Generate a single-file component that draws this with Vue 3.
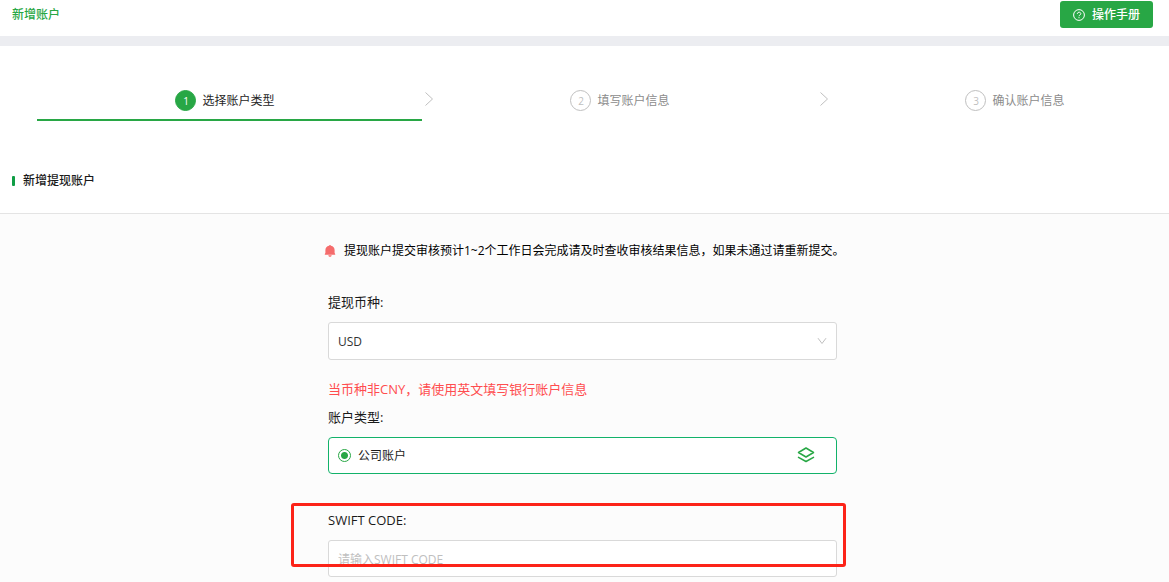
<script setup>
import { ref } from 'vue'

const steps = ['选择账户类型', '填写账户信息', '确认账户信息']
const current = ref(0)
const currency = ref('USD')
const accountType = ref('company')
const swift = ref('')
</script>

<template>
  <div class="page">
    <header class="topbar">
      <h1>新增账户</h1>
      <button type="button" class="manual">
        <svg viewBox="0 0 12 12" width="12" height="12" fill="none" stroke="currentColor" aria-hidden="true">
          <circle cx="6" cy="6" r="5.4" />
          <path d="M4.3 4.9c0-2.3 3.5-2.2 3.5-.2 0 1.3-1.8 1.2-1.8 2.5M6 8.2v1" />
        </svg>
        <span>操作手册</span>
      </button>
    </header>

    <nav class="steps-wrap">
      <ol class="steps">
        <li v-for="(step, i) in steps" :key="step" :class="{ active: i === current }">
          <span class="num">{{ i + 1 }}</span>
          <span>{{ step }}</span>
          <svg v-if="i < steps.length - 1" class="arrow" viewBox="0 0 8 14" width="8" height="14" fill="none" stroke="#bfbfbf" aria-hidden="true">
            <path d="M.5.5 7.5 7 .5 13.5" />
          </svg>
        </li>
      </ol>
    </nav>

    <h2 class="section-title">新增提现账户</h2>

    <main class="content">
      <form class="form" @submit.prevent>
        <p class="notice">
          <svg viewBox="0 0 12 14" width="12" height="14" fill="#f56c6c" aria-hidden="true">
            <path d="M6 1c.6 0 .9.3 1 .8 2.200.4 3.600 2 3.600 4.200v3l.6.900v.900H.8v-.9l.6-.9V6c0-2.200 1.400-3.800 3.600-4.200.1-.5.4-.8 1-.8zM4.300 11.200h3.400c-.2 1-.9 1.600-1.700 1.600s-1.500-.6-1.700-1.600z" />
          </svg>
          <span>提现账户提交审核预计1~2个工作日会完成请及时查收审核结果信息，如果未通过请重新提交。</span>
        </p>

        <label class="label" for="currency">提现币种:</label>
        <div class="select-box">
          <select id="currency" v-model="currency">
            <option>USD</option>
          </select>
          <svg viewBox="0 0 10 8" width="10" height="8" fill="none" stroke="#bfbfbf" aria-hidden="true">
            <path d="M1 1.200 5 6.500 9 1.200" />
          </svg>
        </div>
        <p class="warning">当币种非CNY，请使用英文填写银行账户信息</p>

        <div id="type-label" class="label">账户类型:</div>
        <label class="type-card">
          <input v-model="accountType" type="radio" name="type" value="company" aria-describedby="type-label">
          <span>公司账户</span>
          <svg viewBox="0 0 18 17" width="18" height="17" fill="none" stroke="#28a745" stroke-width="1.500" stroke-linejoin="round" stroke-linecap="round" aria-hidden="true">
            <path d="M9 1 16.500 5.500 9 10 1.500 5.500zM1.500 10.300 9 14.500l7.500-4.200" />
          </svg>
        </label>

        <div class="swift">
          <label class="label" for="swift">SWIFT CODE:</label>
          <input id="swift" v-model="swift" type="text" placeholder="请输入SWIFT CODE">
          <div class="highlight"></div>
        </div>
      </form>
    </main>
  </div>
</template>

<style>
body {
  background: #fcfcfc;
}
</style>

<style scoped>
.page {
  overflow: hidden;
  font-family: "Open Sans", "Noto Sans CJK SC", sans-serif;
  font-size: 12px;
  line-height: 20px;
  color: #1a1a1a;
}
.page * {
  box-sizing: border-box;
}
h1,
h2,
p,
ol {
  margin: 0;
  padding: 0;
}
.topbar {
  display: flex;
  justify-content: space-between;
  align-items: flex-start;
  height: 46px;
  padding: 1px 16px 0 12px;
  border-bottom: 10px solid #ecedf1;
  background: #fff;
}
h1 {
  padding-top: 4px;
  font-size: 12px;
  font-weight: 500;
  color: #28a745;
}
.manual {
  display: flex;
  align-items: center;
  justify-content: center;
  gap: 7px;
  height: 27px;
  padding: 0 13px;
  border: 0;
  border-radius: 3px;
  background: #28a745;
  color: #fff;
  font: inherit;
  font-weight: 500;
}
.steps-wrap {
  padding: 44px 0;
  background: #fff;
}
.steps {
  display: grid;
  grid-template-columns: repeat(3, 1fr);
  margin: 0 -44px 0 28px;
  list-style: none;
}
.steps li {
  position: relative;
  display: flex;
  justify-content: center;
  gap: 6px;
  height: 31px;
  padding-right: 1px;
  line-height: 22px;
  color: #8c8c8c;
}
.steps li.active {
  color: #262626;
}
.steps li.active::after {
  content: "";
  position: absolute;
  left: 9px;
  right: 1px;
  bottom: 0;
  height: 2px;
  background: #28a745;
}
.num {
  width: 21px;
  height: 21px;
  border: 1px solid #bfbfbf;
  border-radius: 50%;
  font-size: 10px;
  line-height: 20px;
  text-align: center;
  color: #bfbfbf;
}
.active .num {
  border-color: #28a745;
  background: #28a745;
  color: #fff;
}
.arrow {
  position: absolute;
  top: 2px;
  right: -10px;
}
.section-title {
  display: flex;
  align-items: center;
  gap: 8px;
  height: 49px;
  padding: 0 12px 16px;
  border-bottom: 1px solid #e4e4e4;
  background: #fff;
  font-size: 12px;
  font-weight: 500;
}
.section-title::before {
  content: "";
  width: 3px;
  height: 10px;
  border-radius: 1px;
  background: #0f9d45;
}
.content {
  padding: 27px 4px 5px 0;
}
.form {
  max-width: 509px;
  margin: 0 auto;
}
.notice {
  display: flex;
  align-items: center;
  gap: 8px;
  margin: 0 -8px 31px -4px;
  white-space: nowrap;
  color: #000;
}
.label {
  display: block;
  margin-bottom: 10px;
  font-size: 13px;
}
.select-box {
  position: relative;
}
.select-box svg {
  position: absolute;
  top: 15px;
  right: 10px;
  pointer-events: none;
}
select,
.swift input {
  display: block;
  width: 100%;
  height: 38px;
  padding: 1px 9px 0;
  border: 1px solid #d9d9d9;
  border-radius: 3px;
  outline: 0;
  background: #fff;
  color: #333;
  font: inherit;
  appearance: none;
}
.warning {
  margin: 19px 0 8px;
  font-size: 13px;
  color: #ff4d4f;
}
.type-card {
  display: flex;
  align-items: center;
  gap: 7px;
  height: 37px;
  padding: 0 21px 0 9px;
  border: 1px solid #12b26a;
  border-radius: 4px;
  background: #fff;
}
.type-card input {
  width: 13px;
  height: 13px;
  margin: 0;
  border: 1px solid #28a745;
  border-radius: 50%;
  background: radial-gradient(circle, #28a745 3px, #fff 4px);
  appearance: none;
}
.type-card svg {
  margin-left: auto;
}
.swift {
  position: relative;
  margin-top: 36px;
}
.swift input {
  height: 37px;
  padding-top: 2px;
}
.swift input::placeholder {
  color: #bfbfbf;
  opacity: 1;
}
.highlight {
  position: absolute;
  top: -7px;
  right: -9px;
  left: -37px;
  height: 64px;
  border: 3px solid #fc2318;
  border-radius: 3px;
  pointer-events: none;
}
</style>
